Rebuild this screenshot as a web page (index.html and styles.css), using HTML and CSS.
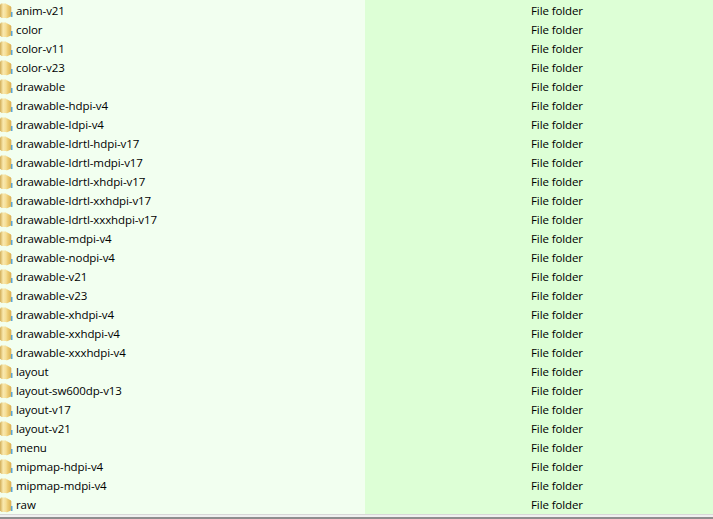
FILE: index.html
```html
<!DOCTYPE html>
<html lang="en">
<head>
<meta charset="utf-8">
<title>Folder listing</title>
<link rel="stylesheet" href="styles.css">
</head>
<body>
<svg class="sprite" width="0" height="0" aria-hidden="true">
  <defs>
    <linearGradient id="fold-front" x1="0" x2="1" y1="0" y2="0">
      <stop offset="0" stop-color="#f3d784"/>
      <stop offset="1" stop-color="#dcb254"/>
    </linearGradient>
    <linearGradient id="fold-back" x1="0" x2="1" y1="0" y2="0">
      <stop offset="0" stop-color="#d2ad58"/>
      <stop offset="0.45" stop-color="#f9e9ae"/>
      <stop offset="1" stop-color="#f3d98e"/>
    </linearGradient>
  </defs>
  <symbol id="folder" viewBox="0 0 13 17">
    <path d="M0 3 1 1.500h5L7 3v13H1.500L0 14.500z" fill="url(#fold-back)"/>
    <path d="M6.500 2 11 4.500v10l-4.500 2z" fill="url(#fold-front)"/>
    <path d="M11 5h1v10h-1z" fill="#e6e2c8"/>
    <path d="M11 10h1.500v5H11z" fill="#5aa5d8"/>
  </symbol>
</svg>
<main class="list">
  <div class="row"><svg class="icon"><use href="#folder"/></svg><span class="name">anim-v21</span><span class="type">File folder</span></div>
  <div class="row"><svg class="icon"><use href="#folder"/></svg><span class="name">color</span><span class="type">File folder</span></div>
  <div class="row"><svg class="icon"><use href="#folder"/></svg><span class="name">color-v11</span><span class="type">File folder</span></div>
  <div class="row"><svg class="icon"><use href="#folder"/></svg><span class="name">color-v23</span><span class="type">File folder</span></div>
  <div class="row"><svg class="icon"><use href="#folder"/></svg><span class="name">drawable</span><span class="type">File folder</span></div>
  <div class="row"><svg class="icon"><use href="#folder"/></svg><span class="name">drawable-hdpi-v4</span><span class="type">File folder</span></div>
  <div class="row"><svg class="icon"><use href="#folder"/></svg><span class="name">drawable-ldpi-v4</span><span class="type">File folder</span></div>
  <div class="row"><svg class="icon"><use href="#folder"/></svg><span class="name">drawable-ldrtl-hdpi-v17</span><span class="type">File folder</span></div>
  <div class="row"><svg class="icon"><use href="#folder"/></svg><span class="name">drawable-ldrtl-mdpi-v17</span><span class="type">File folder</span></div>
  <div class="row"><svg class="icon"><use href="#folder"/></svg><span class="name">drawable-ldrtl-xhdpi-v17</span><span class="type">File folder</span></div>
  <div class="row"><svg class="icon"><use href="#folder"/></svg><span class="name">drawable-ldrtl-xxhdpi-v17</span><span class="type">File folder</span></div>
  <div class="row"><svg class="icon"><use href="#folder"/></svg><span class="name">drawable-ldrtl-xxxhdpi-v17</span><span class="type">File folder</span></div>
  <div class="row"><svg class="icon"><use href="#folder"/></svg><span class="name">drawable-mdpi-v4</span><span class="type">File folder</span></div>
  <div class="row"><svg class="icon"><use href="#folder"/></svg><span class="name">drawable-nodpi-v4</span><span class="type">File folder</span></div>
  <div class="row"><svg class="icon"><use href="#folder"/></svg><span class="name">drawable-v21</span><span class="type">File folder</span></div>
  <div class="row"><svg class="icon"><use href="#folder"/></svg><span class="name">drawable-v23</span><span class="type">File folder</span></div>
  <div class="row"><svg class="icon"><use href="#folder"/></svg><span class="name">drawable-xhdpi-v4</span><span class="type">File folder</span></div>
  <div class="row"><svg class="icon"><use href="#folder"/></svg><span class="name">drawable-xxhdpi-v4</span><span class="type">File folder</span></div>
  <div class="row"><svg class="icon"><use href="#folder"/></svg><span class="name">drawable-xxxhdpi-v4</span><span class="type">File folder</span></div>
  <div class="row"><svg class="icon"><use href="#folder"/></svg><span class="name">layout</span><span class="type">File folder</span></div>
  <div class="row"><svg class="icon"><use href="#folder"/></svg><span class="name">layout-sw600dp-v13</span><span class="type">File folder</span></div>
  <div class="row"><svg class="icon"><use href="#folder"/></svg><span class="name">layout-v17</span><span class="type">File folder</span></div>
  <div class="row"><svg class="icon"><use href="#folder"/></svg><span class="name">layout-v21</span><span class="type">File folder</span></div>
  <div class="row"><svg class="icon"><use href="#folder"/></svg><span class="name">menu</span><span class="type">File folder</span></div>
  <div class="row"><svg class="icon"><use href="#folder"/></svg><span class="name">mipmap-hdpi-v4</span><span class="type">File folder</span></div>
  <div class="row"><svg class="icon"><use href="#folder"/></svg><span class="name">mipmap-mdpi-v4</span><span class="type">File folder</span></div>
  <div class="row"><svg class="icon"><use href="#folder"/></svg><span class="name">raw</span><span class="type">File folder</span></div>
</main>
<footer class="edge"></footer>
</body>
</html>
```
FILE: styles.css
```css
html, body { margin: 0; padding: 0; }
body {
  width: 713px;
  height: 519px;
  overflow: hidden;
  background: #fff;
  font-family: "Open Sans", "Noto Sans", sans-serif;
  font-size: 11.5px;
  letter-spacing: -0.1px;
  color: #000;
  display: flex;
  flex-direction: column;
}
.sprite { position: absolute; }
.list {
  flex: 1;
  padding-top: 1px;
  background: linear-gradient(to right, #f2fff0 0, #f2fff0 365px, #ddffd6 365px, #ddffd6 100%);
  overflow: hidden;
}
.row {
  display: flex;
  align-items: center;
  height: 19px;
}
.icon { width: 13px; height: 17px; flex: none; margin-right: 3px; }
.name { width: 515px; flex: none; white-space: nowrap; }
.type { white-space: nowrap; }
.edge {
  flex: none;
  height: 5px;
  box-sizing: border-box;
  background: #f0f0f0;
  border-top: 1px solid #d8d8d8;
  border-bottom: 2px solid #8e8e8e;
}
```
